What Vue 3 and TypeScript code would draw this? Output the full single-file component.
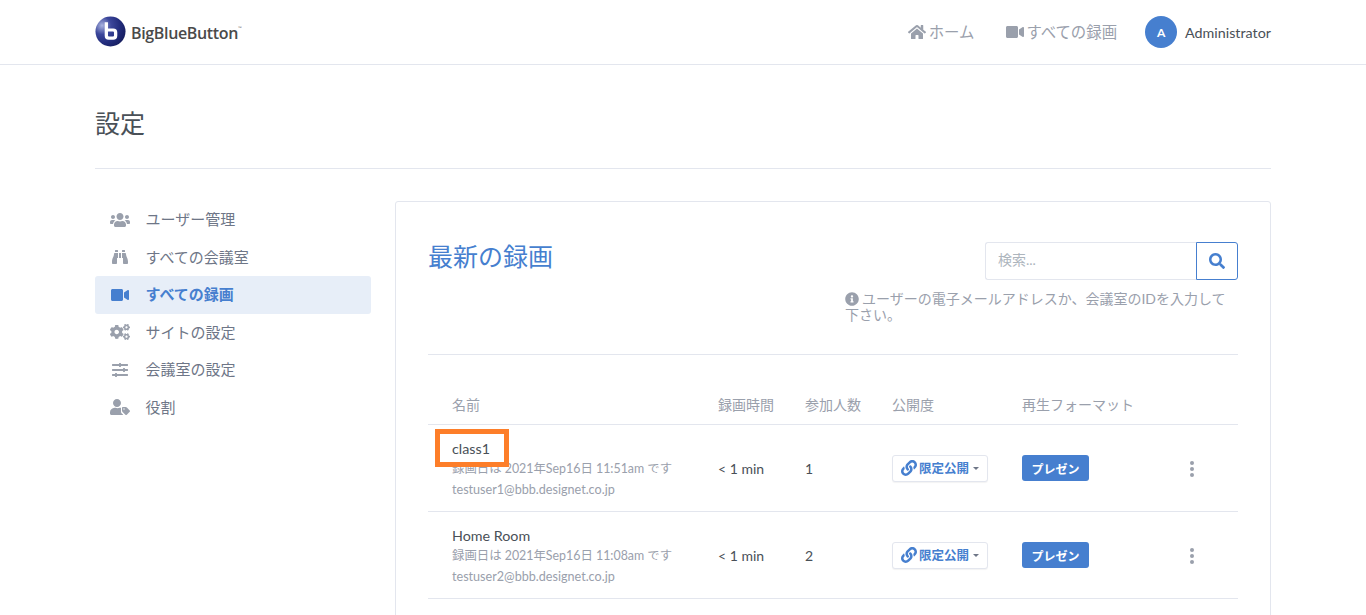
<script setup lang="ts">
const icons: Record<string, { box: string; d: string }> = {
  home: { box: '0 0 576 512', d: 'M280.37 148.26L96 300.11V464a16 16 0 0 0 16 16l112.06-.29a16 16 0 0 0 15.92-16V368a16 16 0 0 1 16-16h64a16 16 0 0 1 16 16v95.64a16 16 0 0 0 16 16.05L464 480a16 16 0 0 0 16-16V300L295.67 148.26a12.19 12.19 0 0 0-15.3 0zM571.6 251.47L488 182.56V44.05a12 12 0 0 0-12-12h-56a12 12 0 0 0-12 12v72.61L318.47 43a48 48 0 0 0-61 0L4.34 251.47a12 12 0 0 0-1.6 16.9l25.5 31A12 12 0 0 0 45.15 301l235.22-193.74a12.19 12.19 0 0 1 15.3 0L530.9 301a12 12 0 0 0 16.9-1.6l25.5-31a12 12 0 0 0-1.7-16.93z' },
  video: { box: '0 0 576 512', d: 'M336.2 64H47.8C21.4 64 0 85.4 0 111.8v288.4C0 426.6 21.4 448 47.8 448h288.4c26.4 0 47.8-21.4 47.8-47.8V111.8c0-26.4-21.4-47.8-47.8-47.8zm189.4 37.7L416 177.3v157.4l109.6 75.5c21.2 14.6 50.4-.3 50.4-25.8V127.5c0-25.4-29.1-40.4-50.4-25.8z' },
  users: { box: '0 0 640 512', d: 'M96 224c35.3 0 64-28.7 64-64s-28.7-64-64-64-64 28.7-64 64 28.7 64 64 64zm448 0c35.3 0 64-28.7 64-64s-28.7-64-64-64-64 28.7-64 64 28.7 64 64 64zm32 32h-64c-17.6 0-33.5 7.1-45.1 18.6 40.3 22.1 68.9 62 75.1 109.4h66c17.7 0 32-14.3 32-32v-32c0-35.3-28.7-64-64-64zm-256 0c61.9 0 112-50.1 112-112S381.9 32 320 32 208 82.1 208 144s50.1 112 112 112zm76.8 32h-8.3c-20.8 10-43.9 16-68.5 16s-47.6-6-68.5-16h-8.3C179.6 288 128 339.6 128 403.2V432c0 26.5 21.5 48 48 48h288c26.5 0 48-21.5 48-48v-28.8c0-63.6-51.6-115.2-115.2-115.2zm-223.7-13.4C161.5 263.1 145.6 256 128 256H64c-35.3 0-64 28.7-64 64v32c0 17.7 14.3 32 32 32h65.9c6.3-47.4 34.9-87.3 75.2-109.4z' },
  binoculars: { box: '0 0 512 512', d: 'M416 48c0-8.84-7.16-16-16-16h-64c-8.84 0-16 7.16-16 16v48h96V48zM63.91 159.99C61.4 253.84 3.46 274.22 0 404v44c0 17.67 14.33 32 32 32h96c17.67 0 32-14.33 32-32V288h32V128H95.84c-17.63 0-31.45 14.37-31.93 31.99zm384.18 0c-.48-17.62-14.3-31.99-31.93-31.99H320v160h32v160c0 17.67 14.33 32 32 32h96c17.67 0 32-14.33 32-32v-44c-3.46-129.78-61.4-150.16-63.91-244.01zM176 32h-64c-8.84 0-16 7.16-16 16v48h96V48c0-8.84-7.16-16-16-16zm48 256h64V128h-64v160z' },
  cogs: { box: '0 0 640 512', d: 'M512.1 191l-8.2 14.3c-3 5.3-9.4 7.5-15.1 5.4-11.8-4.4-22.6-10.7-32.1-18.6-4.6-3.8-5.8-10.5-2.8-15.7l8.2-14.3c-6.9-8-12.3-17.3-15.9-27.4h-16.5c-6 0-11.2-4.3-12.2-10.3-2-12-2.1-24.6 0-37.1 1-6 6.2-10.4 12.2-10.4h16.5c3.6-10.1 9-19.4 15.9-27.4l-8.2-14.3c-3-5.2-1.9-11.9 2.8-15.7 9.5-7.9 20.4-14.2 32.1-18.6 5.7-2.1 12.1.1 15.1 5.4l8.2 14.3c10.5-1.9 21.2-1.9 31.7 0L552 6.3c3-5.3 9.4-7.5 15.1-5.4 11.8 4.4 22.6 10.7 32.1 18.6 4.6 3.8 5.8 10.5 2.8 15.7l-8.2 14.3c6.9 8 12.3 17.3 15.9 27.4h16.5c6 0 11.2 4.3 12.2 10.3 2 12 2.1 24.6 0 37.1-1 6-6.2 10.4-12.2 10.4h-16.5c-3.6 10.1-9 19.4-15.9 27.4l8.2 14.3c3 5.2 1.9 11.9-2.8 15.7-9.5 7.9-20.4 14.2-32.1 18.6-5.7 2.1-12.1-.1-15.1-5.4l-8.2-14.3c-10.4 1.9-21.2 1.9-31.7 0zm-10.5-58.8c38.5 29.6 82.4-14.3 52.8-52.8-38.5-29.7-82.4 14.3-52.8 52.8zM386.3 286.1l33.7 16.8c10.1 5.8 14.5 18.1 10.5 29.1-8.9 24.2-26.4 46.4-42.6 65.8-7.4 8.9-20.2 11.1-30.3 5.3l-29.1-16.8c-16 13.7-34.6 24.6-54.9 31.7v33.6c0 11.6-8.3 21.6-19.7 23.6-24.6 4.2-50.4 4.4-75.9 0-11.5-2-20-11.9-20-23.6V418c-20.3-7.2-38.9-18-54.9-31.7L74 403c-10 5.8-22.9 3.6-30.3-5.3-16.2-19.4-33.3-41.6-42.2-65.7-4-10.9.4-23.2 10.5-29.1l33.3-16.8c-3.9-20.9-3.9-42.4 0-63.4L12 205.8c-10.1-5.8-14.6-18.1-10.5-29 8.9-24.2 26-46.4 42.2-65.8 7.4-8.9 20.2-11.1 30.3-5.3l29.1 16.8c16-13.7 34.6-24.6 54.9-31.7V57c0-11.5 8.2-21.5 19.6-23.5 24.6-4.2 50.5-4.4 76-.1 11.5 2 20 11.9 20 23.6v33.6c20.3 7.2 38.9 18 54.9 31.7l29.1-16.8c10-5.8 22.9-3.6 30.3 5.3 16.2 19.4 33.2 41.6 42.1 65.8 4 10.9.1 23.2-10 29.1l-33.7 16.8c3.9 21 3.9 42.5 0 63.5zm-117.6 21.1c59.2-77-28.7-164.9-105.7-105.7-59.2 77 28.7 164.9 105.7 105.7zm243.4 182.7l-8.2 14.3c-3 5.3-9.4 7.5-15.1 5.4-11.8-4.4-22.6-10.7-32.1-18.6-4.6-3.8-5.8-10.5-2.8-15.7l8.2-14.3c-6.9-8-12.3-17.3-15.9-27.4h-16.5c-6 0-11.2-4.3-12.2-10.3-2-12-2.1-24.6 0-37.1 1-6 6.2-10.4 12.2-10.4h16.5c3.6-10.1 9-19.4 15.9-27.4l-8.2-14.3c-3-5.2-1.9-11.9 2.8-15.7 9.5-7.9 20.4-14.2 32.1-18.6 5.7-2.1 12.1.1 15.1 5.4l8.2 14.3c10.5-1.9 21.2-1.9 31.7 0l8.2-14.3c3-5.3 9.4-7.5 15.1-5.4 11.8 4.4 22.6 10.7 32.1 18.6 4.6 3.8 5.8 10.5 2.8 15.7l-8.2 14.3c6.9 8 12.3 17.3 15.9 27.4h16.5c6 0 11.2 4.3 12.2 10.3 2 12 2.1 24.6 0 37.1-1 6-6.2 10.4-12.2 10.4h-16.5c-3.6 10.1-9 19.4-15.9 27.4l8.2 14.3c3 5.2 1.9 11.9-2.8 15.7-9.5 7.9-20.4 14.2-32.1 18.6-5.7 2.1-12.1-.1-15.1-5.4l-8.2-14.3c-10.4 1.9-21.2 1.9-31.7 0zM501.6 431c38.5 29.6 82.4-14.3 52.8-52.8-38.5-29.6-82.4 14.3-52.8 52.8z' },
  sliders: { box: '0 0 512 512', d: 'M496 384H160v-16c0-8.8-7.2-16-16-16h-32c-8.8 0-16 7.2-16 16v16H16c-8.8 0-16 7.2-16 16v32c0 8.8 7.2 16 16 16h80v16c0 8.8 7.2 16 16 16h32c8.8 0 16-7.2 16-16v-16h336c8.8 0 16-7.2 16-16v-32c0-8.8-7.2-16-16-16zm0-160h-80v-16c0-8.8-7.2-16-16-16h-32c-8.8 0-16 7.2-16 16v16H16c-8.8 0-16 7.2-16 16v32c0 8.8 7.2 16 16 16h336v16c0 8.8 7.2 16 16 16h32c8.8 0 16-7.2 16-16v-16h80c8.8 0 16-7.2 16-16v-32c0-8.8-7.2-16-16-16zm0-160H288V48c0-8.8-7.2-16-16-16h-32c-8.8 0-16 7.2-16 16v16H16C7.2 64 0 71.2 0 80v32c0 8.8 7.2 16 16 16h208v16c0 8.8 7.2 16 16 16h32c8.8 0 16-7.2 16-16v-16h208c8.8 0 16-7.2 16-16V80c0-8.8-7.2-16-16-16z' },
  usertag: { box: '0 0 640 512', d: 'M630.6 364.9l-90.3-90.2c-12-12-28.3-18.7-45.3-18.7h-79.3c-17.7 0-32 14.3-32 32v79.2c0 17 6.7 33.2 18.7 45.2l90.3 90.2c12.5 12.5 32.8 12.5 45.3 0l92.5-92.5c12.6-12.5 12.6-32.7.1-45.2zm-182.8-21c-13.3 0-24-10.7-24-24s10.7-24 24-24 24 10.7 24 24c0 13.2-10.7 24-24 24zm-223.8-88c70.7 0 128-57.3 128-128C352 57.3 294.7 0 224 0S96 57.3 96 128c0 70.6 57.3 128 128 128zm127.8 32c0-1.6.2-3.2.5-4.7-6.4-1.3-13-2-19.8-2h-16.7c-22.2 10.2-46.9 16-72.9 16s-50.6-5.8-72.9-16h-16.7C60.2 288 0 348.2 0 422.4V464c0 26.5 21.5 48 48 48h352c8.2 0 16-2.1 22.8-5.9l-52.6-52.6c-12.2-12.2-18.4-28.2-18.4-45.2z' },
  search: { box: '0 0 512 512', d: 'M505 442.7L405.3 343c-4.5-4.5-10.6-7-17-7H372c27.6-35.3 44-79.7 44-128C416 93.1 322.9 0 208 0S0 93.1 0 208s93.1 208 208 208c48.3 0 92.7-16.4 128-44v16.3c0 6.4 2.5 12.5 7 17l99.7 99.7c9.4 9.4 24.6 9.4 33.9 0l28.3-28.3c9.4-9.4 9.4-24.6.1-34zM208 336c-70.7 0-128-57.2-128-128 0-70.7 57.2-128 128-128 70.7 0 128 57.2 128 128 0 70.7-57.2 128-128 128z' },
  info: { box: '0 0 512 512', d: 'M256 8C119.043 8 8 119.083 8 256c0 136.997 111.043 248 248 248s248-111.003 248-248C504 119.083 392.957 8 256 8zm0 110c23.196 0 42 18.804 42 42s-18.804 42-42 42-42-18.804-42-42 18.804-42 42-42zm56 254c0 6.627-5.373 12-12 12h-88c-6.627 0-12-5.373-12-12v-24c0-6.627 5.373-12 12-12h12v-64h-12c-6.627 0-12-5.373-12-12v-24c0-6.627 5.373-12 12-12h64c6.627 0 12 5.373 12 12v100h12c6.627 0 12 5.373 12 12v24z' },
  link: { box: '0 0 512 512', d: 'M326.612 185.391c59.747 59.809 58.927 155.698.36 214.59-.11.12-.24.25-.36.37l-67.2 67.2c-59.27 59.27-155.699 59.262-214.96 0-59.27-59.26-59.27-155.7 0-214.96l37.106-37.106c9.84-9.84 26.786-3.3 27.294 10.606.648 17.722 3.826 35.527 9.69 52.721 1.986 5.822.567 12.262-3.783 16.612l-13.087 13.087c-28.026 28.026-28.905 73.66-1.155 101.96 28.024 28.579 74.086 28.749 102.325.51l67.2-67.19c28.191-28.191 28.073-73.757 0-101.83-3.701-3.694-7.429-6.564-10.341-8.569a16.037 16.037 0 0 1-6.947-12.606c-.396-10.567 3.348-21.456 11.698-29.806l21.054-21.055c5.521-5.521 14.182-6.199 20.584-1.731a152.482 152.482 0 0 1 20.522 17.197zM467.547 44.449c-59.261-59.262-155.69-59.27-214.96 0l-67.2 67.2c-.12.12-.25.25-.36.37-58.566 58.892-59.387 154.781.36 214.59a152.454 152.454 0 0 0 20.521 17.196c6.402 4.468 15.064 3.789 20.584-1.731l21.054-21.055c8.35-8.35 12.094-19.239 11.698-29.806a16.037 16.037 0 0 0-6.947-12.606c-2.912-2.005-6.64-4.875-10.341-8.569-28.073-28.073-28.191-73.639 0-101.83l67.2-67.19c28.239-28.239 74.3-28.069 102.325.51 27.75 28.3 26.872 73.934-1.155 101.96l-13.087 13.087c-4.35 4.35-5.769 10.79-3.783 16.612 5.864 17.194 9.042 34.999 9.69 52.721.509 13.906 17.454 20.446 27.294 10.606l37.106-37.106c59.271-59.259 59.271-155.699.001-214.959z' },
}

const menu = [
  { label: 'ユーザー管理', icon: 'users' },
  { label: 'すべての会議室', icon: 'binoculars' },
  { label: 'すべての録画', icon: 'video', active: true },
  { label: 'サイトの設定', icon: 'cogs' },
  { label: '会議室の設定', icon: 'sliders' },
  { label: '役割', icon: 'usertag' },
]

const rows = [
  { name: 'class1', date: '録画日は 2021年Sep16日 11:51am です', mail: 'testuser1@bbb.designet.co.jp', len: '< 1 min', users: '1', mark: true },
  { name: 'Home Room', date: '録画日は 2021年Sep16日 11:08am です', mail: 'testuser2@bbb.designet.co.jp', len: '< 1 min', users: '2', mark: false },
]
</script>

<template>
  <div class="page">
    <header class="topbar">
      <div class="wrap topbar-in">
        <div class="logo">
          <svg class="logo-mark" viewBox="0 0 32 32" width="31" height="31">
            <defs>
              <radialGradient id="lg" cx="22%" cy="30%" r="85%">
                <stop offset="0" stop-color="#aab4e0" />
                <stop offset="0.35" stop-color="#3c479b" />
                <stop offset="0.7" stop-color="#222c7c" />
                <stop offset="1" stop-color="#161d5e" />
              </radialGradient>
            </defs>
            <circle cx="16" cy="16" r="15.5" fill="url(#lg)" />
            <path d="M10 6.5h3.400v6.300h5.400a4.200 4.200 0 0 1 4.200 4.200v3.300a4.200 4.200 0 0 1-4.200 4.200h-4.600a4.200 4.200 0 0 1-4.200-4.200zM13.400 16v4a1.100 1.100 0 0 0 1.100 1.100h4a1.100 1.100 0 0 0 1.100-1.100v-2.900a1.100 1.100 0 0 0-1.100-1.100z" fill="#fff" />
          </svg>
          <span class="logo-text">BigBlueButton</span><span class="tm">™</span>
        </div>
        <nav class="nav">
          <a class="nav-link home">
            <svg class="ic" :viewBox="icons.home.box" width="18" height="16"><path :d="icons.home.d" /></svg>
            <span class="lift">ホーム</span>
          </a>
          <a class="nav-link rec">
            <svg class="ic" :viewBox="icons.video.box" width="18" height="16"><path :d="icons.video.d" /></svg>
            <span class="lift">すべての録画</span>
          </a>
          <span class="avatar">A</span>
          <span class="user">Administrator</span>
        </nav>
      </div>
    </header>

    <main class="wrap">
      <h1 class="page-title">設定</h1>
      <div class="layout">
        <aside class="side">
          <a v-for="m in menu" :key="m.label" class="side-item" :class="{ active: m.active }">
            <span class="side-ic">
              <svg class="ic" :viewBox="icons[m.icon].box" height="16" width="20"><path :d="icons[m.icon].d" /></svg>
            </span>
            <span class="lift">{{ m.label }}</span>
          </a>
        </aside>

        <section class="card">
          <div class="card-head">
            <h2 class="card-title">最新の録画</h2>
            <div class="search-box">
              <div class="search">
                <input class="search-input" placeholder="検索..." />
                <button class="search-btn">
                  <svg class="ic" :viewBox="icons.search.box" width="16" height="16"><path :d="icons.search.d" /></svg>
                </button>
              </div>
              <p class="hint"><svg class="ic info" :viewBox="icons.info.box" width="14" height="14"><path :d="icons.info.d" /></svg>ユーザーの電子メールアドレスか、会議室のIDを入力して下さい。</p>
            </div>
          </div>

          <div class="grid thead">
            <div class="c-name">名前</div>
            <div>録画時間</div>
            <div>参加人数</div>
            <div>公開度</div>
            <div>再生フォーマット</div>
            <div></div>
          </div>
          <div v-for="r in rows" :key="r.name" class="grid trow">
            <div class="c-name cell-name">
              <div class="rec-name">
                {{ r.name }}
                <span v-if="r.mark" class="mark"></span>
              </div>
              <div class="rec-sub">{{ r.date }}</div>
              <div class="rec-mail">{{ r.mail }}</div>
            </div>
            <div>{{ r.len }}</div>
            <div>{{ r.users }}</div>
            <div>
              <button class="vis">
                <svg class="ic" :viewBox="icons.link.box" width="16" height="16"><path :d="icons.link.d" /></svg>
                <span class="lift-sm">限定公開</span>
                <i class="caret"></i>
              </button>
            </div>
            <div><span class="pill">プレゼン</span></div>
            <div class="more"><i></i><i></i><i></i></div>
          </div>
        </section>
      </div>
    </main>
  </div>
</template>

<style>
html, body { margin: 0; height: 615px; overflow: hidden; background: #fff; }
</style>

<style scoped>
.page {
  font-family: "Lato", "Noto Sans CJK JP", sans-serif;
  font-size: 14px;
  color: #495057;
  height: 615px;
  overflow: hidden;
}
.wrap { width: 1176px; margin: 0 auto; }
.ic { fill: currentColor; display: block; }
.lift { margin-top: -2px; }
.lift-sm { margin-top: -2px; }

.topbar { height: 64px; border-bottom: 1px solid #e3e6ee; }
.topbar-in { height: 64px; display: flex; align-items: center; justify-content: space-between; }
.logo { display: flex; align-items: center; margin-top: -2px; }
.logo-mark { margin-right: 5px; }
.logo-text { font-family: "Open Sans", sans-serif; font-size: 16px; font-weight: 600; color: #4a4a4a; letter-spacing: -0.35px; margin-top: 3px; }
.tm { font-size: 5px; color: #777; margin-top: -6px; }
.nav { display: flex; align-items: center; }
.nav-link { display: flex; align-items: center; gap: 2px; color: #9aa0ac; font-size: 15.4px; }
.nav-link.home { gap: 3px; }
.nav-link.rec { margin-left: 32px; }
.avatar {
  width: 32px; height: 32px; border-radius: 50%; background: #467fcf; color: #fff;
  font-weight: 700; font-size: 12px; display: flex; align-items: center; justify-content: center;
  margin-left: 28px;
}
.user { margin-left: 8px; font-size: 14.3px; color: #495057; }

.page-title { margin: 0; padding: 43px 0 30px; font-size: 25px; line-height: 30px; font-weight: 400; color: #495057; border-bottom: 1px solid #e3e6ee; }
.layout { display: flex; gap: 24px; margin-top: 32px; align-items: flex-start; }

.side { width: 276px; flex: none; }
.side-item {
  display: flex; align-items: center; height: 37.5px; padding-left: 15px;
  font-size: 15px; color: #6e7687; border-radius: 3px;
}
.side-ic { width: 35.500px; flex: none; color: #9aa0ac; }
.side-item.active { background: #e7eef8; color: #467fcf; font-weight: 700; }
.side-item.active .side-ic { color: #467fcf; }

.card { width: 876px; flex: none; box-sizing: border-box; height: 500px; border: 1px solid #e3e6ee; border-radius: 3px; padding: 40px 32px 0; }
.card-head { display: flex; justify-content: space-between; height: 113px; box-sizing: border-box; border-bottom: 1px solid #e3e6ee; }
.card-title { margin: 0; font-size: 25px; line-height: 28px; font-weight: 400; color: #467fcf; }
.search-box { width: 393px; }
.search { display: flex; justify-content: flex-end; height: 38px; }
.search-input {
  width: 211px; box-sizing: border-box; height: 38px; border: 1px solid #e3e6ee; border-right: 0;
  border-radius: 3px 0 0 3px; padding: 0 12px 3px; font: inherit; font-size: 14px; outline: none; color: #495057;
}
.search-input::placeholder { color: #adb5bd; }
.search-btn {
  width: 42px; height: 38px; background: #fff; border: 1px solid #467fcf; border-radius: 0 3px 3px 0;
  color: #467fcf; display: flex; align-items: center; justify-content: center; padding: 0;
}
.hint { margin: 11px 0 0; font-size: 14px; line-height: 16px; color: #9aa0ac; padding-right: 10px; }
.info { display: inline-block; vertical-align: -2px; margin-right: 3px; }

.grid { display: grid; grid-template-columns: 290px 87px 87px 130px 154px 1fr; }
.c-name { padding-left: 24px; position: relative; }
.thead { height: 70px; box-sizing: border-box; align-items: end; padding-bottom: 9px; color: #9aa0ac; line-height: 21px; border-bottom: 1px solid #e3e6ee; }
.trow { height: 87px; box-sizing: border-box; align-items: center; border-bottom: 1px solid #e3e6ee; color: #495057; }
.cell-name { padding-top: 2px; }
.rec-name { position: relative; line-height: 21px; font-size: 14.3px; }
.rec-sub { font-size: 12.4px; line-height: 20px; color: #9aa0ac; }
.rec-mail { font-size: 12.6px; line-height: 21px; color: #9aa0ac; }
.mark { position: absolute; left: -17px; top: -9px; width: 74px; height: 38px; box-sizing: border-box; border: 5px solid #fd7e29; }
.vis {
  width: 96px; height: 27px; box-sizing: border-box; background: #fff; border: 1px solid #e3e6ee; border-radius: 3px;
  display: flex; align-items: center; padding: 0 0 0 8px; gap: 2px; color: #467fcf; font: inherit; font-size: 12.5px; font-weight: 700;
  box-shadow: 0 1px 1px rgba(0,0,0,.05);
}
.caret { width: 0; height: 0; border: 3px solid transparent; border-top-color: #6e7687; border-bottom: 0; margin-left: 2px; }
.pill {
  display: inline-flex; align-items: center; justify-content: center; width: 67px; height: 26px;
  background: #467fcf; color: #fff; border-radius: 3px; font-size: 12px; font-weight: 700;
}
.more { display: flex; flex-direction: column; align-items: flex-start; gap: 2px; padding-left: 14px; margin-top: 1px; }
.more i { width: 4px; height: 4px; border-radius: 50%; background: #9aa0ac; }
</style>
